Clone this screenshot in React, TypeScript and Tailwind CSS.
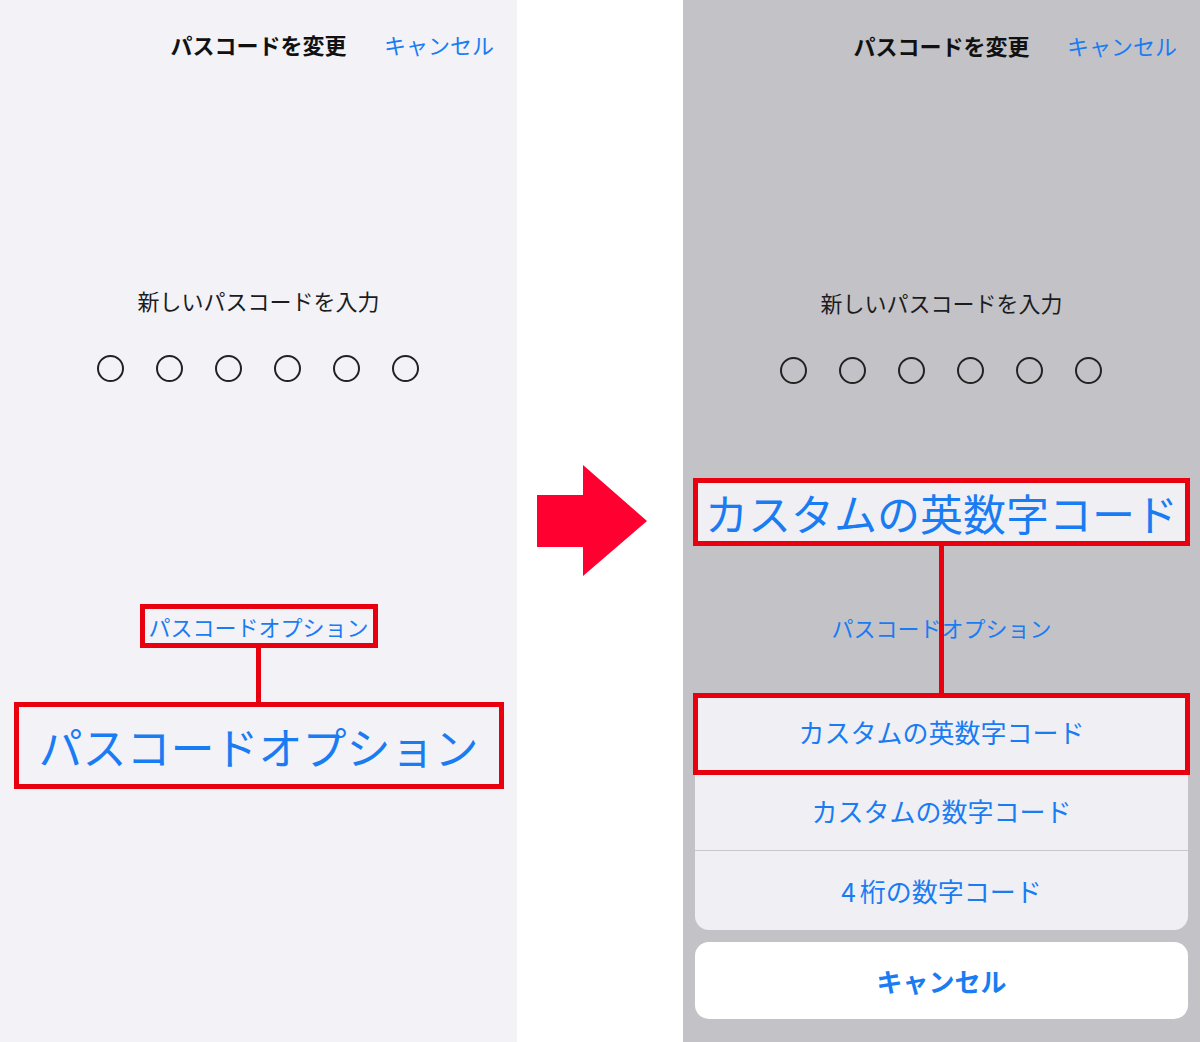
const font = "font-['Noto_Sans_CJK_JP','Noto_Sans',sans-serif]";
const blue = "text-[#1a7cf2]";
const red = "border-[#e8000e]";

function Header() {
  return (
    <div className="grid h-[92px] grid-cols-[1fr_auto_1fr] items-center pb-[4px]">
      <div />
      <div className="text-[22px] font-bold leading-none text-[#111]">パスコードを変更</div>
      <div className={`justify-self-end pr-[23px] text-[22px] leading-none ${blue}`}>キャンセル</div>
    </div>
  );
}

function Dots() {
  return (
    <div className="flex justify-center gap-[32px] pr-[1px]">
      {[0, 1, 2, 3, 4, 5].map((i) => (
        <span key={i} className="h-[27px] w-[27px] rounded-full border-2 border-[#222]" />
      ))}
    </div>
  );
}

function Prompt() {
  return (
    <div className="flex h-[30px] items-center justify-center text-[22px] leading-none text-[#1c1c1e]">
      新しいパスコードを入力
    </div>
  );
}

function LeftPanel() {
  return (
    <div className="flex h-[1042px] w-[517px] shrink-0 flex-col bg-[#f2f2f7]">
      <Header />
      <div className="mt-[193px]">
        <Prompt />
      </div>
      <div className="mt-[40px]">
        <Dots />
      </div>
      <div
        className={`mx-auto mt-[222px] flex h-[44px] w-[238px] items-center justify-center border-[5px] ${red} text-[22px] leading-none ${blue}`}
      >
        パスコードオプション
      </div>
      <div className="mx-auto h-[54px] w-[5px] bg-[#e8000e]" />
      <div
        className={`mx-auto flex h-[87px] w-[490px] items-center justify-center border-[5px] ${red} text-[44px] leading-none ${blue}`}
      >
        パスコードオプション
      </div>
    </div>
  );
}

function Arrow() {
  return (
    <div className="flex w-[166px] shrink-0 items-center bg-white pl-[20px]">
      <svg width="111" height="112" viewBox="0 0 111 112" className="mt-[-1px]">
        <polygon points="0,30 46,30 46,0 110,56 46,111 46,82 0,82" fill="#ff0030" />
      </svg>
    </div>
  );
}

function RightPanel() {
  return (
    <div className="flex h-[1042px] w-[517px] shrink-0 flex-col bg-[#c3c3c7]">
      <div className="pt-[1px]">
        <Header />
      </div>
      <div className="mt-[194px]">
        <Prompt />
      </div>
      <div className="mt-[40px]">
        <Dots />
      </div>
      <div
        className={`mx-[10px] mt-[94px] flex h-[68px] items-center justify-center border-[5px] ${red} bg-[#efeff4] text-[43px] leading-none ${blue}`}
      >
        カスタムの英数字コード
      </div>
      <div className="relative flex h-[147px] items-center justify-center">
        <span className={`mt-[14px] text-[22px] leading-none ${blue}`}>パスコードオプション</span>
        <div className="absolute left-[256px] top-0 h-full w-[5px] bg-[#e8000e]" />
      </div>
      <div className="relative mx-[12px]">
        <div className="flex flex-col overflow-hidden rounded-[14px] bg-[#efeff4]">
          <div className="flex h-[79px] items-center justify-center border-b border-[#c8c8cc]">
            <span className={`text-[26px] leading-none ${blue}`}>カスタムの英数字コード</span>
          </div>
          <div className="flex h-[79px] items-center justify-center border-b border-[#c8c8cc]">
            <span className={`text-[26px] leading-none ${blue}`}>カスタムの数字コード</span>
          </div>
          <div className="flex h-[79px] items-center justify-center">
            <span className={`text-[26px] leading-none ${blue}`}>
              <span className="mr-[4px]">4</span>桁の数字コード
            </span>
          </div>
        </div>
        <div className={`absolute -left-[2px] -right-[2px] top-0 h-[82px] border-[5px] ${red}`} />
      </div>
      <div className="mx-[12px] mt-[12px] flex h-[77px] items-center justify-center rounded-[14px] bg-white">
        <span className={`text-[26px] font-bold leading-none ${blue}`}>キャンセル</span>
      </div>
    </div>
  );
}

export default function App() {
  return (
    <div className={`flex h-[1042px] w-[1200px] overflow-hidden ${font}`}>
      <LeftPanel />
      <Arrow />
      <RightPanel />
    </div>
  );
}
